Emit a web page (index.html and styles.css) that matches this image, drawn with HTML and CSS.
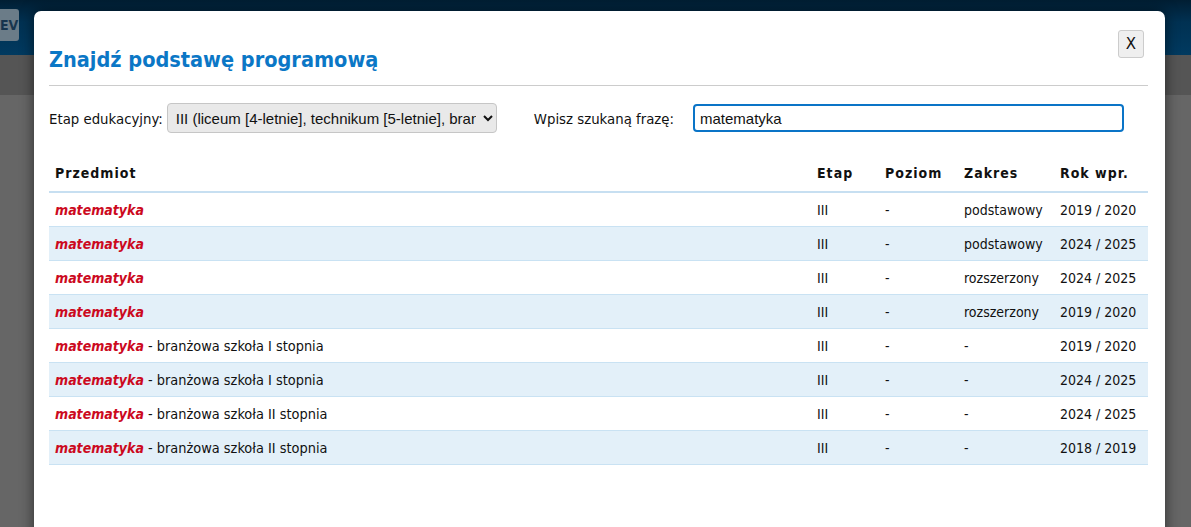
FILE: index.html
```html
<!DOCTYPE html>
<html lang="pl">
<head>
    <meta charset="UTF-8">
    <meta name="viewport" content="width=device-width, initial-scale=1.0">
    <title>Znajdź podstawę programową</title>
    <link rel="stylesheet" href="styles.css">
</head>
<body>
    <div class="page">
        <header class="topbar">
            <span class="ev-btn">EV</span>
        </header>
        <div class="subbar"></div>
        <div class="content"></div>
    </div>

    <div class="modal">
        <div class="modal-head">
            <h1>Znajdź podstawę programową</h1>
            <button class="close-btn" type="button">X</button>
        </div>

        <form class="filters">
            <label for="etap">Etap edukacyjny:</label>
            <select id="etap" name="etap">
                <option>III (liceum [4-letnie], technikum [5-letnie], branżowa szkoła I i II stopnia)</option>
            </select>
            <label for="fraza" class="fraza-label">Wpisz szukaną frazę:</label>
            <input type="text" id="fraza" name="fraza" value="matematyka">
        </form>

        <table class="results">
            <thead>
                <tr>
                    <th class="col-subject">Przedmiot</th>
                    <th class="col-etap">Etap</th>
                    <th class="col-poziom">Poziom</th>
                    <th class="col-zakres">Zakres</th>
                    <th class="col-rok">Rok wpr.</th>
                </tr>
            </thead>
            <tbody>
                <tr><td><em>matematyka</em></td><td>III</td><td>-</td><td>podstawowy</td><td>2019 / 2020</td></tr>
                <tr><td><em>matematyka</em></td><td>III</td><td>-</td><td>podstawowy</td><td>2024 / 2025</td></tr>
                <tr><td><em>matematyka</em></td><td>III</td><td>-</td><td>rozszerzony</td><td>2024 / 2025</td></tr>
                <tr><td><em>matematyka</em></td><td>III</td><td>-</td><td>rozszerzony</td><td>2019 / 2020</td></tr>
                <tr><td><em>matematyka</em> - branżowa szkoła I stopnia</td><td>III</td><td>-</td><td>-</td><td>2019 / 2020</td></tr>
                <tr><td><em>matematyka</em> - branżowa szkoła I stopnia</td><td>III</td><td>-</td><td>-</td><td>2024 / 2025</td></tr>
                <tr><td><em>matematyka</em> - branżowa szkoła II stopnia</td><td>III</td><td>-</td><td>-</td><td>2024 / 2025</td></tr>
                <tr><td><em>matematyka</em> - branżowa szkoła II stopnia</td><td>III</td><td>-</td><td>-</td><td>2018 / 2019</td></tr>
            </tbody>
        </table>
    </div>
</body>
</html>
```

FILE: styles.css
```css
html, body {
    margin: 0;
    padding: 0;
    height: 100%;
    overflow: hidden;
}
body {
    font-family: "DejaVu Sans Condensed", "DejaVu Sans", sans-serif;
    background-color: #666;
}
.page {
    height: 100%;
    display: flex;
    flex-direction: column;
}
.topbar {
    height: 55px;
    background: linear-gradient(to bottom, #011e33 0%, #013152 40%, #013a60 100%);
    display: flex;
    align-items: center;
}
.ev-btn {
    display: block;
    margin-top: -6px;
    width: 19px;
    height: 32px;
    line-height: 32px;
    text-align: right;
    padding-right: 1px;
    box-sizing: border-box;
    background: #6b7c88;
    border-radius: 0 3px 3px 0;
    color: #17354e;
    font-weight: bold;
    font-size: 14px;
    white-space: nowrap;
    font-family: "DejaVu Sans Condensed", sans-serif;
}
.subbar {
    height: 40px;
    background: #555;
}
.content {
    flex: 1;
    background: #666;
}
.modal {
    position: absolute;
    left: 34px;
    top: 11px;
    width: 1131px;
    height: 560px;
    box-sizing: border-box;
    padding: 0 17px 0 15px;
    background: #fff;
    border-radius: 7px;
    box-shadow: 0 0 14px rgba(0, 0, 0, 0.55);
}
.modal-head {
    display: flex;
    justify-content: space-between;
    align-items: flex-start;
    border-bottom: 1px solid #ccc;
    height: 74px;
}
.modal-head h1 {
    margin: 35px 0 0 0;
    font-size: 21.5px;
    line-height: 28px;
    font-weight: bold;
    color: #0b77c6;
}
.close-btn {
    margin: 19px 4px 0 0;
    width: 26px;
    height: 28px;
    padding: 0;
    background: #efefef;
    border: 1px solid #ccc;
    border-radius: 3px;
    font-family: "DejaVu Sans", sans-serif;
    font-size: 15px;
    color: #111;
}
.filters {
    display: flex;
    align-items: center;
    margin-top: 17px;
    height: 30px;
    font-size: 14.8px;
    color: #111;
}
.filters label {
    margin-right: 4px;
}
.filters select {
    width: 330px;
    height: 30px;
    padding: 0 4px;
    background: #e9e9e9;
    border: 1px solid #c6c6c6;
    border-radius: 4px;
    font-family: "Liberation Sans", Arial, sans-serif;
    font-size: 15px;
    color: #111;
}
.filters .fraza-label {
    margin-left: 37px;
    margin-right: 19px;
}
.filters input[type="text"] {
    width: 431px;
    height: 28px;
    box-sizing: border-box;
    padding: 0 5px;
    border: 2px solid #0a74c7;
    border-radius: 4px;
    font-family: "Liberation Sans", Arial, sans-serif;
    font-size: 15px;
    color: #111;
    outline: none;
}
.results {
    width: 100%;
    margin-top: 22px;
    border-collapse: collapse;
    font-size: 14px;
    color: #111;
}
.results th {
    text-align: left;
    font-weight: bold;
    letter-spacing: 1px;
    padding: 0 6px 0 6px;
    height: 36px;
    border-bottom: 2px solid #c7dff1;
}
.results td {
    height: 33px;
    padding: 0 6px;
    border-bottom: 1px solid #c9e2f3;
}
.results td:first-child {
    font-size: 14.4px;
}
.results tbody tr:nth-child(even) td {
    background: #e3f0f9;
}
.results em {
    color: #cc0a1e;
    font-weight: bold;
    font-size: 14px;
}
.results .col-etap { width: 56px; }
.results .col-poziom { width: 67px; }
.results .col-zakres { width: 84px; }
.results .col-rok { width: 82px; }
```
